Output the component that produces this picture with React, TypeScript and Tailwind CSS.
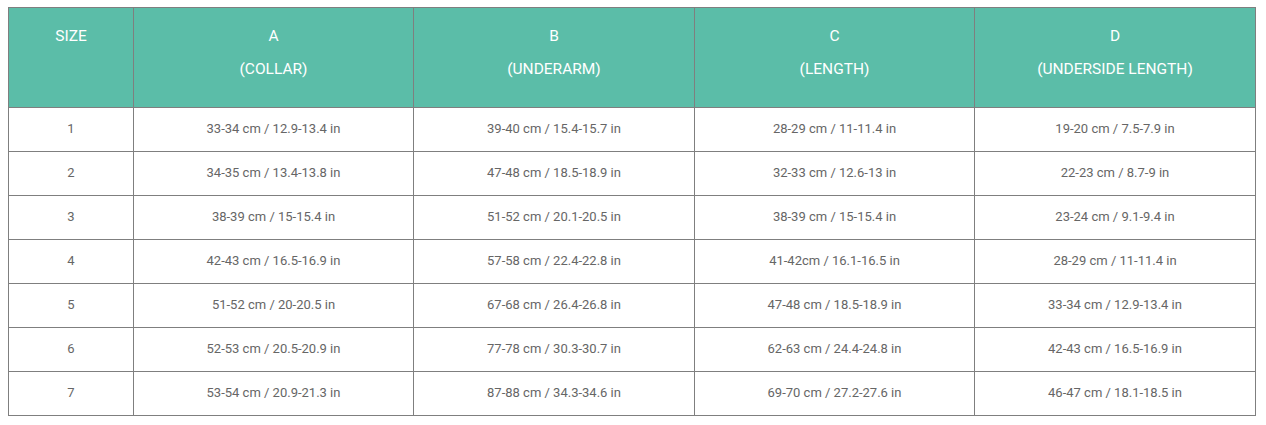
import React from "react";

const cols = [
  { w: "w-[125px]", t: "SIZE", s: "" },
  { w: "w-[280px]", t: "A", s: "(COLLAR)" },
  { w: "w-[281px]", t: "B", s: "(UNDERARM)" },
  { w: "w-[280px]", t: "C", s: "(LENGTH)" },
  { w: "w-[281px]", t: "D", s: "(UNDERSIDE LENGTH)" },
];

const rows = [
  ["1", "33-34 cm / 12.9-13.4 in", "39-40 cm / 15.4-15.7 in", "28-29 cm / 11-11.4 in", "19-20 cm / 7.5-7.9 in"],
  ["2", "34-35 cm / 13.4-13.8 in", "47-48 cm / 18.5-18.9 in", "32-33 cm / 12.6-13 in", "22-23 cm / 8.7-9 in"],
  ["3", "38-39 cm / 15-15.4 in", "51-52 cm / 20.1-20.5 in", "38-39 cm / 15-15.4 in", "23-24 cm / 9.1-9.4 in"],
  ["4", "42-43 cm / 16.5-16.9 in", "57-58 cm / 22.4-22.8 in", "41-42cm / 16.1-16.5 in", "28-29 cm / 11-11.4 in"],
  ["5", "51-52 cm / 20-20.5 in", "67-68 cm / 26.4-26.8 in", "47-48 cm / 18.5-18.9 in", "33-34 cm / 12.9-13.4 in"],
  ["6", "52-53 cm / 20.5-20.9 in", "77-78 cm / 30.3-30.7 in", "62-63 cm / 24.4-24.8 in", "42-43 cm / 16.5-16.9 in"],
  ["7", "53-54 cm / 20.9-21.3 in", "87-88 cm / 34.3-34.6 in", "69-70 cm / 27.2-27.6 in", "46-47 cm / 18.1-18.5 in"],
];

export default function App() {
  return (
    <div className="bg-white w-[1266px] h-[425px] pt-[7px] pl-[8px] font-['Roboto',sans-serif]">
      <table className="border-collapse table-fixed w-[1248px]">
        <thead>
          <tr className="bg-[#5bbda8]">
            {cols.map((c, i) => (
              <th
                key={i}
                className={`${c.w} h-[100px] border border-[#7f7f7f] align-top p-0 text-white text-[15.5px] font-normal`}
              >
                <div className="flex flex-col items-center pt-[18px] gap-[13px] leading-[20px]">
                  <span>{c.t}</span>
                  {c.s && <span>{c.s}</span>}
                </div>
              </th>
            ))}
          </tr>
        </thead>
        <tbody>
          {rows.map((r, ri) => (
            <tr key={ri}>
              {r.map((v, ci) => (
                <td
                  key={ci}
                  className="h-[44px] border border-[#7f7f7f] text-center align-middle p-0 pb-[2px] text-[13px] leading-[20px] text-[#666666]"
                >
                  {v}
                </td>
              ))}
            </tr>
          ))}
        </tbody>
      </table>
    </div>
  );
}
